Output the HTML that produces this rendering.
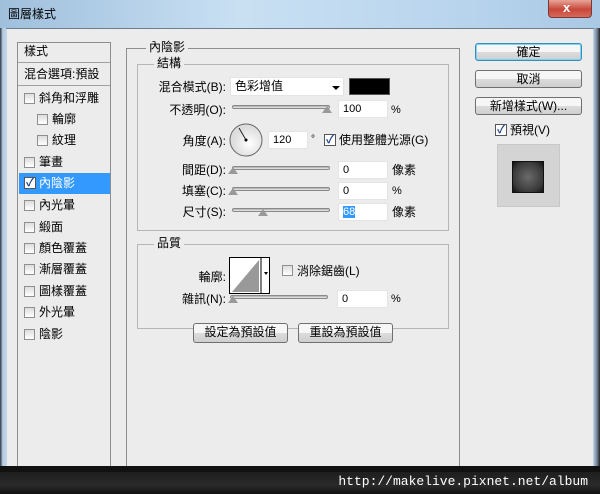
<!DOCTYPE html>
<html><head><meta charset="utf-8"><style>
*{margin:0;padding:0;box-sizing:border-box}
body{width:600px;height:494px;overflow:hidden;background:#ececec;position:relative;font-family:"Liberation Sans","Noto Sans CJK TC",sans-serif;font-size:12px;color:#000}
.a{position:absolute}
.t{position:absolute;white-space:nowrap;line-height:14px}
.cb{position:absolute;width:11px;height:11px;border:1px solid #8f8f8f;background:linear-gradient(#ddd,#fff)}
.cbk{position:absolute;width:12px;height:12px;border:1px solid #555;background:#fff;font-size:11px;line-height:10px;text-align:center;color:#1c3f8c;font-weight:bold}
.inp{position:absolute;background:#fff;border:1px solid #e4e4e4;height:18px;padding-left:4px;line-height:16px;font-size:11px}
.sl{position:absolute;height:4px;border:1px solid #8a8a8a;border-radius:2px;background:linear-gradient(#aaa,#eee)}
.th{position:absolute;width:0;height:0;border-left:5px solid transparent;border-right:5px solid transparent;border-bottom:7px solid #999}
.fs{position:absolute;border:1px solid #b5b5b5}
.btn{position:absolute;border:1px solid #707070;border-radius:3px;background:linear-gradient(#f6f6f6 50%,#dcdcdc 50%,#cfcfcf);text-align:center;line-height:16px}
</style></head><body>
<div class="a" style="left:0;top:0;width:600px;height:28px;background:linear-gradient(90deg,#9fbfdc,#c9e0f3 40%,#b7d3ec 80%,#a9c8e4)"></div>
<div class="t" style="left:8px;top:7px;font-size:12px">圖層樣式</div>
<div class="a" style="left:548px;top:0;width:44px;height:18px;border:1px solid #7a3a33;border-top:none;border-radius:0 0 4px 4px;background:linear-gradient(#e8a598,#c7473a 55%,#d66a5a)"></div>
<div class="t" style="left:563px;top:1px;color:#fff;font-weight:bold;font-size:13px">x</div>
<div class="a" style="left:0;top:28px;width:7px;height:444px;background:linear-gradient(90deg,#2a3440,#b6cde2 40%,#c2d6ea)"></div>
<div class="a" style="left:593px;top:28px;width:7px;height:444px;background:linear-gradient(90deg,#c2d6ea,#6d7e8e 60%,#222)"></div>
<div class="a" style="left:6px;top:28px;width:588px;height:1px;background:#6d7e8f"></div>
<div class="a" style="left:17px;top:42px;width:94px;height:432px;border:1px solid #8e8e8e;background:#ececec"></div>
<div class="t" style="left:24px;top:44px">樣式</div>
<div class="a" style="left:18px;top:62px;width:92px;height:1px;background:#a0a0a0"></div>
<div class="t" style="left:24px;top:67px">混合選項:預設</div>
<div class="a" style="left:18px;top:85px;width:92px;height:1px;background:#a0a0a0"></div>
<div class="cb" style="left:24px;top:93px"></div><div class="t" style="left:39px;top:91px">斜角和浮雕</div>
<div class="cb" style="left:37px;top:114px"></div><div class="t" style="left:52px;top:112px">輪廓</div>
<div class="cb" style="left:37px;top:135px"></div><div class="t" style="left:52px;top:133px">紋理</div>
<div class="cb" style="left:24px;top:157px"></div><div class="t" style="left:39px;top:155px">筆畫</div>
<div class="a" style="left:19px;top:173px;width:91px;height:21px;background:#3399ff"></div>
<div class="cbk" style="left:24px;top:177px">✓</div><div class="t" style="left:39px;top:176px;color:#fff">內陰影</div>
<div class="cb" style="left:24px;top:200px"></div><div class="t" style="left:39px;top:198px">內光暈</div>
<div class="cb" style="left:24px;top:222px"></div><div class="t" style="left:39px;top:220px">緞面</div>
<div class="cb" style="left:24px;top:243px"></div><div class="t" style="left:39px;top:241px">顏色覆蓋</div>
<div class="cb" style="left:24px;top:264px"></div><div class="t" style="left:39px;top:262px">漸層覆蓋</div>
<div class="cb" style="left:24px;top:286px"></div><div class="t" style="left:39px;top:284px">圖樣覆蓋</div>
<div class="cb" style="left:24px;top:307px"></div><div class="t" style="left:39px;top:305px">外光暈</div>
<div class="cb" style="left:24px;top:329px"></div><div class="t" style="left:39px;top:327px">陰影</div>
<div class="fs" style="left:126px;top:48px;width:334px;height:430px;border-color:#8e8e8e"></div>
<div class="t" style="left:146px;top:40px;background:#ececec;padding:0 3px">內陰影</div>
<div class="fs" style="left:137px;top:64px;width:312px;height:167px"></div>
<div class="t" style="left:154px;top:56px;background:#ececec;padding:0 3px">結構</div>
<div class="t" style="left:146px;top:80px;width:80px;text-align:right">混合模式(B):</div>
<div class="inp" style="left:230px;top:77px;width:114px;height:19px;font-size:12px">色彩增值</div>
<div class="a" style="left:332px;top:86px;border-left:4px solid transparent;border-right:4px solid transparent;border-top:4px solid #000"></div>
<div class="a" style="left:349px;top:78px;width:41px;height:17px;background:#000;border:1px solid #555"></div>
<div class="t" style="left:146px;top:103px;width:80px;text-align:right">不透明(O):</div>
<div class="sl" style="left:232px;top:105px;width:98px"></div><div class="th" style="left:322px;top:106px"></div>
<div class="inp" style="left:338px;top:100px;width:50px">100</div><div class="t" style="left:391px;top:103px;font-size:11px">%</div>
<div class="t" style="left:146px;top:134px;width:80px;text-align:right">角度(A):</div>
<svg class="a" style="left:229px;top:123px" width="34" height="34"><defs><radialGradient id="g" cx="60%" cy="60%"><stop offset="0" stop-color="#fff"/><stop offset="1" stop-color="#ddd"/></radialGradient></defs><circle cx="17" cy="17" r="16" fill="url(#g)" stroke="#666"/><line x1="17" y1="17" x2="10" y2="5" stroke="#222" stroke-width="1"/><circle cx="17" cy="17" r="1.5" fill="#000"/></svg>
<div class="inp" style="left:268px;top:131px;width:40px">120</div>
<div class="t" style="left:311px;top:133px;font-size:10px">°</div>
<div class="cbk" style="left:324px;top:134px">✓</div><div class="t" style="left:339px;top:133px">使用整體光源(G)</div>
<div class="t" style="left:146px;top:163px;width:80px;text-align:right">間距(D):</div>
<div class="sl" style="left:232px;top:166px;width:98px"></div><div class="th" style="left:228px;top:167px"></div>
<div class="inp" style="left:338px;top:161px;width:50px">0</div><div class="t" style="left:392px;top:163px">像素</div>
<div class="t" style="left:146px;top:184px;width:80px;text-align:right">填塞(C):</div>
<div class="sl" style="left:232px;top:187px;width:98px"></div><div class="th" style="left:228px;top:188px"></div>
<div class="inp" style="left:338px;top:182px;width:50px">0</div><div class="t" style="left:392px;top:184px;font-size:11px">%</div>
<div class="t" style="left:146px;top:205px;width:80px;text-align:right">尺寸(S):</div>
<div class="sl" style="left:232px;top:208px;width:98px"></div><div class="th" style="left:258px;top:209px"></div>
<div class="inp" style="left:338px;top:203px;width:50px"><span style="background:#3399ff;color:#fff">68</span></div><div class="t" style="left:392px;top:205px">像素</div>
<div class="fs" style="left:137px;top:244px;width:312px;height:85px"></div>
<div class="t" style="left:154px;top:236px;background:#ececec;padding:0 3px">品質</div>
<div class="t" style="left:146px;top:270px;width:80px;text-align:right">輪廓:</div>
<div class="a" style="left:229px;top:257px;width:41px;height:37px;border:1px solid #000;background:#fff;overflow:hidden">
<svg width="39" height="35" style="position:absolute;left:0;top:0"><polygon points="2,34 29,2 29,34" fill="#999"/><line x1="31" y1="0" x2="31" y2="35" stroke="#000"/><polygon points="34,14 38,14 36,17" fill="#000"/></svg></div>
<div class="cb" style="left:282px;top:265px"></div><div class="t" style="left:297px;top:264px">消除鋸齒(L)</div>
<div class="t" style="left:146px;top:292px;width:80px;text-align:right">雜訊(N):</div>
<div class="sl" style="left:230px;top:295px;width:98px"></div><div class="th" style="left:228px;top:296px"></div>
<div class="inp" style="left:337px;top:290px;width:51px">0</div><div class="t" style="left:391px;top:292px;font-size:11px">%</div>
<div class="btn" style="left:193px;top:323px;width:95px;height:20px">設定為預設值</div>
<div class="btn" style="left:298px;top:323px;width:95px;height:20px">重設為預設值</div>
<div class="btn" style="left:475px;top:43px;width:107px;height:18px;border-color:#3c8bbf;box-shadow:inset 0 0 0 1px #7cd3f5">確定</div>
<div class="btn" style="left:475px;top:70px;width:107px;height:18px">取消</div>
<div class="btn" style="left:475px;top:97px;width:107px;height:18px">新增樣式(W)...</div>
<div class="cbk" style="left:495px;top:124px">✓</div><div class="t" style="left:510px;top:123px">預視(V)</div>
<div class="a" style="left:497px;top:144px;width:63px;height:63px;background:#d4d4d4;border:1px solid #c8c8c8"></div>
<div class="a" style="left:512px;top:161px;width:32px;height:32px;background:radial-gradient(#6b6b6b,#3a3a3a 70%,#111);border:1px solid #111"></div>
<div class="a" style="left:0;top:472px;width:600px;height:22px;background:linear-gradient(#1e1e1e,#2a2a2a 60%,#111)"></div>
<div class="a" style="left:0;top:466px;width:600px;height:6px;background:#111"></div>
<div class="t" style="right:12px;top:475px;color:#fff;font-family:'Liberation Mono',monospace;font-size:13px">http://makelive.pixnet.net/album</div>
</body></html>
